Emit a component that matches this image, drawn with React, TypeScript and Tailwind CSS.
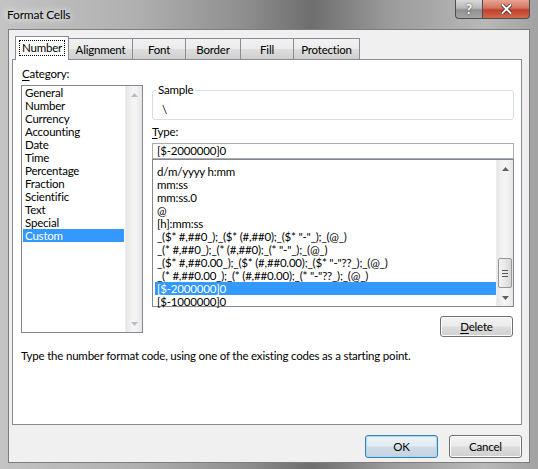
import React from 'react';

const categories = ['General', 'Number', 'Currency', 'Accounting', 'Date', 'Time', 'Percentage', 'Fraction', 'Scientific', 'Text', 'Special', 'Custom'];

const formats = [
  'd/m/yyyy h:mm',
  'mm:ss',
  'mm:ss.0',
  '@',
  '[h]:mm:ss',
  '_($* #,##0_);_($* (#,##0);_($* "-"_);_(@_)',
  '_(* #,##0_);_(* (#,##0);_(* "-"_);_(@_)',
  '_($* #,##0.00_);_($* (#,##0.00);_($* "-"??_);_(@_)',
  '_(* #,##0.00_);_(* (#,##0.00);_(* "-"??_);_(@_)',
  '[$-2000000]0',
  '[$-1000000]0',
];

const tabs = [
  { label: 'Alignment', w: 'w-[65px]' },
  { label: 'Font', w: 'w-[54px]' },
  { label: 'Border', w: 'w-[56px]' },
  { label: 'Fill', w: 'w-[54px]' },
  { label: 'Protection', w: 'w-[67px]' },
];

const Arrow = ({ up, dim }: { up?: boolean; dim?: boolean }) => (
  <svg width="7" height="4" viewBox="0 0 7 4" className="block">
    <path d={up ? 'M0 4 L3.5 0 L7 4 Z' : 'M0 0 L3.5 4 L7 0 Z'} fill={dim ? '#bcbcbc' : '#606060'} />
  </svg>
);

const ScrollBar = ({ dim, thumb }: { dim?: boolean; thumb?: boolean }) => (
  <div className="flex w-[17px] flex-col border-l border-[#ececec] bg-[linear-gradient(90deg,#e6e6e6,#f4f4f4_40%,#f4f4f4_60%,#e6e6e6)]">
    <div className="flex h-[17px] items-center justify-center">
      <Arrow up dim={dim} />
    </div>
    <div className="flex flex-1 flex-col justify-end">
      {thumb && (
        <div className="mx-px mb-px flex h-[30px] flex-col items-center justify-center gap-[2px] rounded-[2px] border border-[#979797] bg-[linear-gradient(90deg,#f3f3f3,#e8e8e8_50%,#d6d6d6)]">
          <div className="h-px w-[6px] bg-[#5a5a5a]" />
          <div className="h-px w-[6px] bg-[#5a5a5a]" />
          <div className="h-px w-[6px] bg-[#5a5a5a]" />
        </div>
      )}
    </div>
    <div className="flex h-[17px] items-center justify-center">
      <Arrow dim={dim} />
    </div>
  </div>
);

const Button = ({ children, def }: { children: React.ReactNode; def?: boolean }) => (
  <div
    className={`flex h-[23px] w-[73px] items-center justify-center rounded-[3px] border ${
      def
        ? 'border-[#3c7fb1] bg-[linear-gradient(180deg,#eaf2f7,#e2ebf1_48%,#cddce7_52%,#c4d4e0)] shadow-[inset_0_0_0_1px_#a9d9f2]'
        : 'border-[#707070] bg-[linear-gradient(180deg,#f2f2f2,#ebebeb_48%,#dddddd_52%,#cfcfcf)] shadow-[inset_0_0_0_1px_#fcfcfc]'
    }`}
  >
    {children}
  </div>
);

export default function App() {
  return (
    <div
      className="relative h-[469px] w-[538px] overflow-hidden bg-[linear-gradient(90deg,#c3c3c3,#b0b0b0_25%,#8f8f8f_45%,#6e6e6e_58%,#9a9a9a_72%,#b8b8b8_90%,#a2a2a2)] text-[11.5px] leading-[13px] tracking-[-0.2px] text-black"
      style={{ fontFamily: 'Lato, "Noto Sans", sans-serif' }}
    >
      {/* title bar */}
      <div className="flex h-[29px] items-start">
        <div className="pl-[7px] pt-[8px] text-[12px] leading-[14px] [text-shadow:0_0_6px_#ffffff,0_0_10px_#ffffff]">Format Cells</div>
        <div className="ml-auto mr-[8px] flex">
          <div className="flex h-[19px] w-[28px] items-center justify-center rounded-bl-[4px] border border-t-0 border-[#4d4d4d] bg-[linear-gradient(180deg,#d9d9d9,#b8b8b8_45%,#8f8f8f_55%,#a5a5a5)] text-[13px] font-bold leading-none text-white [text-shadow:0_0_2px_#333]">
            ?
          </div>
          <div className="flex h-[19px] w-[47px] items-center justify-center rounded-br-[4px] border border-l-0 border-t-0 border-[#4d4d4d] bg-[linear-gradient(180deg,#e8a493,#d2735f_45%,#c1402c_55%,#d06a4f)]">
            <svg width="11" height="10" viewBox="0 0 11 10">
              <path d="M1.5 1 L9.5 9 M9.5 1 L1.5 9" stroke="#3a1a14" strokeWidth="3.4" strokeLinecap="square" />
              <path d="M1.5 1 L9.5 9 M9.5 1 L1.5 9" stroke="#ffffff" strokeWidth="2" strokeLinecap="square" />
            </svg>
          </div>
        </div>
      </div>

      {/* client area */}
      <div className="ml-[8px] flex h-[434px] w-[522px] flex-col border border-[#7d7d7d] bg-[#f0f0f0]">
        {/* tabs */}
        <div className="relative z-10 -mb-px mt-[6px] flex h-[24px] items-end pl-[6px]">
          <div className="flex h-[24px] w-[54px] items-start justify-center border border-b-0 border-[#898c95] bg-white pt-[3px]">
            <span className="border border-dotted border-black px-[2px] leading-[14px]">Number</span>
          </div>
          {tabs.map((t) => (
            <div
              key={t.label}
              className={`-ml-px mb-px flex h-[21px] ${t.w} items-center justify-center border border-b-0 border-[#898c95] bg-[linear-gradient(180deg,#f2f2f2,#ebebeb_48%,#dddddd_52%,#cfcfcf)]`}
            >
              {t.label}
            </div>
          ))}
        </div>

        {/* panel */}
        <div className="ml-[3px] flex h-[366px] w-[510px] flex-col border border-[#898c95] bg-white pl-[8px] pt-[7px]">
          <div className="flex">
            <div className="flex w-[122px] flex-col">
              <div className="h-[18px] pl-px leading-[14px]">
                <span className="underline underline-offset-2">C</span>ategory:
              </div>
              <div className="flex h-[248px] border border-[#828790] bg-white">
                <div className="flex flex-1 flex-col pl-px pr-px">
                  {categories.map((c) => (
                    <div
                      key={c}
                      className={`h-[13px] pl-[2px] leading-[13px] ${c === 'Custom' ? 'bg-[#3399ff] text-white' : ''}`}
                    >
                      {c}
                    </div>
                  ))}
                </div>
                <ScrollBar dim />
              </div>
            </div>

            <div className="ml-[9px] flex w-[362px] flex-col pt-[23px]">
              <div className="relative h-[30px] rounded-[3px] border border-[#d5dfe5]">
                <div className="absolute left-[3px] top-[-8px] bg-white px-[2px] leading-[14px]">Sample</div>
                <div className="pl-[9px] pt-[12px] leading-[14px]">\</div>
              </div>
              <div className="h-[23px] pt-[5px] leading-[14px]">
                <span className="underline underline-offset-2">T</span>ype:
              </div>
              <div className="h-[16px] border border-[#abadb3] pl-[4px] leading-[14px]">[$-2000000]0</div>
              <div className="flex h-[148px] border border-[#828790] bg-white">
                <div className="flex flex-1 flex-col pl-[2px] pt-[5px]">
                  {formats.map((f) => (
                    <div
                      key={f}
                      className={`h-[13px] whitespace-pre pl-[2px] leading-[13px] ${f === '[$-2000000]0' ? 'bg-[#3399ff] text-white' : ''}`}
                    >
                      {f}
                    </div>
                  ))}
                </div>
                <ScrollBar thumb />
              </div>
              <div className="mt-[9px] flex justify-end pr-px">
                <div className="flex h-[21px] w-[73px] items-center justify-center rounded-[3px] border border-[#707070] bg-[linear-gradient(180deg,#f2f2f2,#ebebeb_48%,#dddddd_52%,#cfcfcf)] shadow-[inset_0_0_0_1px_#fcfcfc]">
                  <span>
                    <span className="underline underline-offset-2">D</span>elete
                  </span>
                </div>
              </div>
            </div>
          </div>
          <div className="mt-[12px] leading-[14px]">
            Type the number format code, using one of the existing codes as a starting point.
          </div>
        </div>

        {/* dialog buttons */}
        <div className="mt-[10px] flex justify-end gap-[11px] pr-[7px]">
          <Button def>OK</Button>
          <Button>Cancel</Button>
        </div>
      </div>
    </div>
  );
}
